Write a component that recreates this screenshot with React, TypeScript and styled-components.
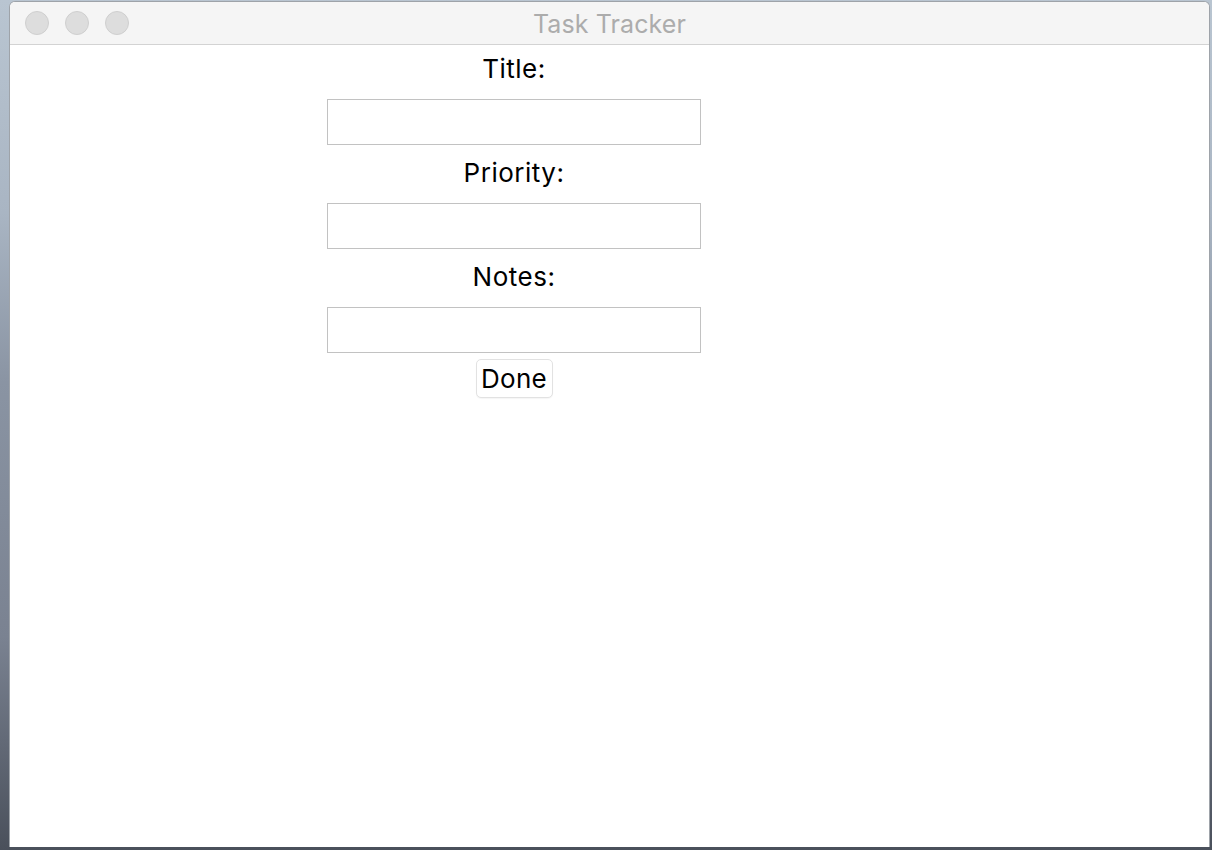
import * as React from 'react';
import styled, { createGlobalStyle } from 'styled-components';

const GlobalStyle = createGlobalStyle`
  html, body {
    margin: 0;
    height: 100%;
  }
  body {
    font-family: Inter, "Helvetica Neue", Arial, sans-serif;
    overflow: hidden;
  }
  #root {
    height: 100%;
  }
`;

const Desktop = styled.div`
  height: 100%;
  box-sizing: border-box;
  padding: 1px 2px 3px 9px;
  display: flex;
  background: linear-gradient(
    180deg,
    #b9c5d1 0%,
    #a9b5c3 25%,
    #8a94a3 45%,
    #7a8291 75%,
    #4a505b 100%
  );
`;

const Window = styled.div`
  flex: 1;
  display: flex;
  flex-direction: column;
  background: #fff;
  border: 1px solid #9ea3a9;
  border-bottom: 0;
  border-radius: 6px 6px 0 0;
  overflow: hidden;
`;

const TitleBar = styled.div`
  height: 42px;
  flex: none;
  display: grid;
  grid-template-columns: 1fr auto 1fr;
  align-items: center;
  background: #f5f5f5;
  border-bottom: 1px solid #d3d3d3;
  padding: 0 15px;
`;

const Lights = styled.div`
  display: flex;
  gap: 16px;
`;

const Light = styled.span`
  width: 22px;
  height: 22px;
  border-radius: 50%;
  background: #dddddd;
  border: 1px solid #cfcfcf;
`;

const WindowTitle = styled.div`
  font-size: 25px;
  color: #acacac;
  letter-spacing: 0.1px;
  padding-top: 2px;
`;

const Content = styled.div`
  flex: 1;
  padding-left: 317px;
`;

const Form = styled.form`
  width: 374px;
  display: flex;
  flex-direction: column;
  align-items: center;
`;

const Label = styled.label<{ $first?: boolean }>`
  font-size: 26px;
  line-height: 48px;
  letter-spacing: 0.5px;
  margin-top: ${p => (p.$first ? '0' : '4px')};
  margin-bottom: 6px;
  color: #000;
`;

const Field = styled.input`
  width: 100%;
  height: 46px;
  box-sizing: border-box;
  border: 1px solid #c2c2c2;
  border-radius: 0;
  outline: none;
  font-size: 20px;
  font-family: inherit;
  padding: 0 8px;
`;

const DoneButton = styled.button`
  margin-top: 6px;
  height: 39px;
  width: 77px;
  padding: 0;
  font-family: inherit;
  font-size: 26px;
  letter-spacing: 0.3px;
  color: #000;
  background: #fff;
  border: 1px solid #e2e2e2;
  border-radius: 5px;
  box-shadow: 0 1px 1px rgba(0, 0, 0, 0.04);
`;

const fields = ['Title', 'Priority', 'Notes'];

export default function App() {
  return (
    <Desktop>
      <GlobalStyle />
      <Window>
        <TitleBar>
          <Lights>
            <Light />
            <Light />
            <Light />
          </Lights>
          <WindowTitle>Task Tracker</WindowTitle>
          <div />
        </TitleBar>
        <Content>
          <Form onSubmit={e => e.preventDefault()}>
            {fields.map((f, i) => (
              <React.Fragment key={f}>
                <Label $first={i === 0} htmlFor={f}>{f}:</Label>
                <Field id={f} type="text" />
              </React.Fragment>
            ))}
            <DoneButton type="submit">Done</DoneButton>
          </Form>
        </Content>
      </Window>
    </Desktop>
  );
}
